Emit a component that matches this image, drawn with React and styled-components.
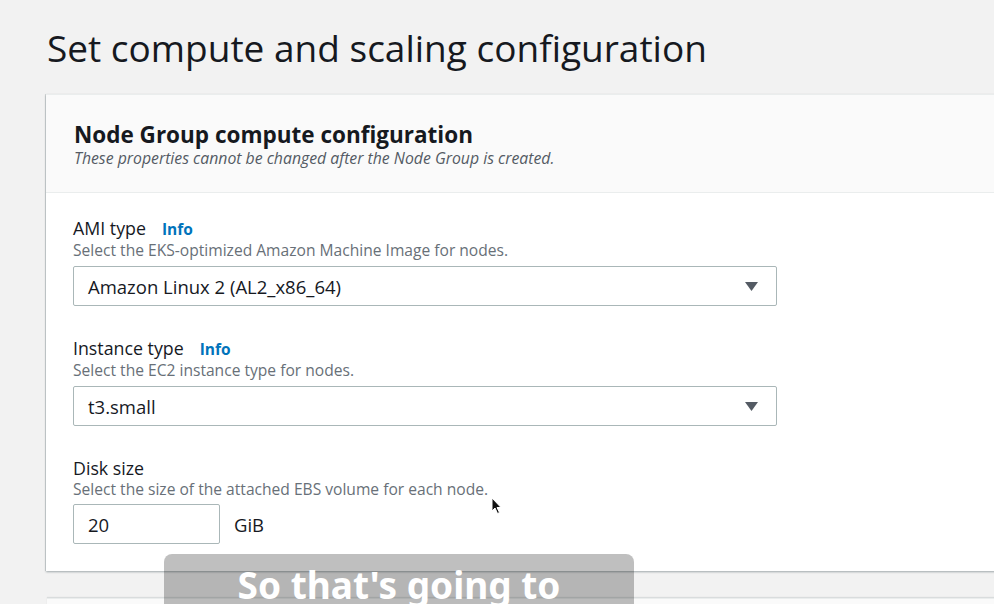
import React from 'react';
import styled, { createGlobalStyle } from 'styled-components';

const GlobalStyle = createGlobalStyle`
    html, body {
        margin: 0;
        padding: 0;
        background: #f2f2f2;
        overflow: hidden;
    }
    body {
        font-family: "Open Sans", "Noto Sans", sans-serif;
        color: #16191f;
    }
`;

const Page = styled.div`
    position: relative;
    width: 994px;
    height: 604px;
    overflow: hidden;
    padding: 26px 0 0 46px;
    box-sizing: border-box;
`;

const Title = styled.h1`
    margin: 0 0 24px 1px;
    font-size: 37px;
    line-height: 44px;
    font-weight: 400;
    color: #16191f;
`;

const Card = styled.section`
    width: 980px;
    background: #fff;
    border-top: 1px solid #eaeded;
    box-shadow: 0 1px 2px rgba(0, 28, 36, 0.35), -1px 0 0 rgba(0, 28, 36, 0.12);
`;

const CardHeader = styled.header`
    background: #fafafa;
    padding: 25px 28px 25px;
    border-bottom: 1px solid #eaeded;
`;

const CardTitle = styled.h2`
    margin: 0;
    font-size: 22.5px;
    line-height: 29px;
    font-weight: 700;
`;

const CardSubtitle = styled.p`
    margin: 0;
    font-size: 15.8px;
    line-height: 18px;
    font-style: italic;
    color: #545b64;
`;

const CardBody = styled.div`
    padding: 24px 28px 27px 27px;
    display: flex;
    flex-direction: column;
    gap: 31px;
`;

const Field = styled.div`
    display: flex;
    flex-direction: column;
`;

const Label = styled.div`
    display: flex;
    align-items: baseline;
    gap: 16px;
    font-size: 17.8px;
    line-height: 22px;
`;

const InfoLink = styled.a`
    font-size: 15.5px;
    font-weight: 700;
    color: #0073bb;
    text-decoration: none;
`;

const Description = styled.div`
    font-size: 15.6px;
    line-height: 20px;
    color: #687078;
    margin-bottom: ${p => p.$gap || 6}px;
`;

const Select = styled.div`
    width: 704px;
    height: 40px;
    box-sizing: border-box;
    border: 1px solid #aab7b8;
    border-radius: 2px;
    background: #fff;
    display: flex;
    align-items: center;
    justify-content: space-between;
    padding: 0 18px 0 14px;
    font-size: 18.5px;
`;

const Caret = styled.svg`
    width: 13px;
    height: 9px;
    fill: #545b64;
`;

const InputRow = styled.div`
    display: flex;
    align-items: center;
    gap: 14px;
    font-size: 18.5px;
`;

const Input = styled.div`
    width: 147px;
    height: 40px;
    box-sizing: border-box;
    border: 1px solid #aab7b8;
    border-radius: 2px;
    display: flex;
    align-items: center;
    padding-left: 14px;
`;

const NextCard = styled.div`
    margin-top: 27px;
    margin-left: 1px;
    height: 20px;
    background: #fafafa;
    border-top: 1px solid #eaeded;
    box-shadow: 0 -1px 1px rgba(0, 28, 36, 0.1);
`;

const Caption = styled.div`
    position: absolute;
    left: 164px;
    top: 554px;
    width: 470px;
    height: 70px;
    border-radius: 8px;
    background: rgba(0, 0, 0, 0.25);
    color: #fff;
    font-family: "Noto Sans", "Open Sans", sans-serif;
    font-weight: 700;
    font-size: 37px;
    line-height: 44px;
    text-align: center;
    padding-top: 9px;
    box-sizing: border-box;
`;

const Cursor = styled.svg`
    position: absolute;
    left: 491px;
    top: 497px;
    width: 12px;
    height: 18px;
`;

const ChevronDown = () => (
    <Caret viewBox="0 0 13 9">
        <path d="M0 0 H13 L6.5 9 Z" />
    </Caret>
);

export default function App() {
    return (
        <>
            <GlobalStyle />
            <Page>
                <Title>Set compute and scaling configuration</Title>
                <Card>
                    <CardHeader>
                        <CardTitle>Node Group compute configuration</CardTitle>
                        <CardSubtitle>These properties cannot be changed after the Node Group is created.</CardSubtitle>
                    </CardHeader>
                    <CardBody>
                        <Field>
                            <Label>AMI type <InfoLink>Info</InfoLink></Label>
                            <Description>Select the EKS-optimized Amazon Machine Image for nodes.</Description>
                            <Select>
                                Amazon Linux 2 (AL2_x86_64)
                                <ChevronDown />
                            </Select>
                        </Field>
                        <Field>
                            <Label>Instance type <InfoLink>Info</InfoLink></Label>
                            <Description>Select the EC2 instance type for nodes.</Description>
                            <Select>
                                t3.small
                                <ChevronDown />
                            </Select>
                        </Field>
                        <Field>
                            <Label>Disk size</Label>
                            <Description $gap={5}>Select the size of the attached EBS volume for each node.</Description>
                            <InputRow>
                                <Input>20</Input>
                                GiB
                            </InputRow>
                        </Field>
                    </CardBody>
                </Card>
                <NextCard />
                <Cursor viewBox="0 0 12 18">
                    <path d="M1 1 L1 14 L4 11 L6.5 16.5 L8.5 15.5 L6 10.5 L10 10.5 Z" fill="#111" stroke="#fff" strokeWidth="1" />
                </Cursor>
                <Caption>So that's going to</Caption>
            </Page>
        </>
    );
}
